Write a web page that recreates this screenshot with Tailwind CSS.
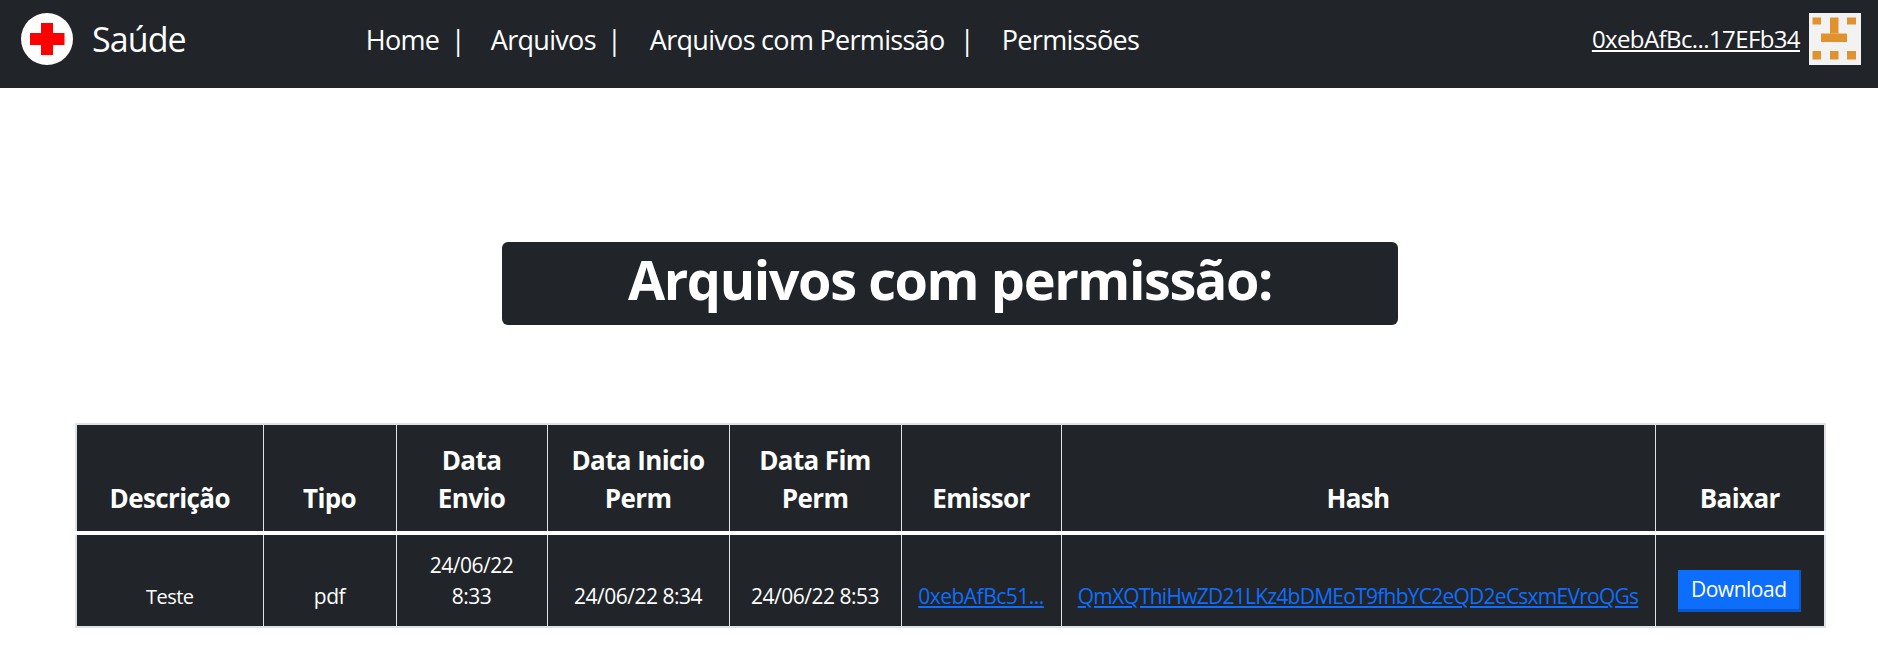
<!DOCTYPE html>
<html lang="pt-BR">
<head>
    <meta charset="UTF-8">
    <title>Saúde</title>
    <script src="https://cdn.jsdelivr.net/npm/@tailwindcss/browser@4"></script>
</head>
<body class="bg-white font-['Open_Sans',sans-serif] text-white">
    <!-- Barra de navegação -->
    <nav class="h-[88px] bg-[#212529] flex items-center pb-[10px] pl-[21px] pr-[17px]">
        <svg class="w-[52px] h-[52px] shrink-0" viewBox="0 0 52 52">
            <circle cx="26" cy="26" r="26" fill="#fff"/>
            <path d="M20 10h12v10h11.500v12H32v10H20V32H9V20h11z" fill="#f00"/>
        </svg>
        <a class="ml-[19px] text-[34px] tracking-[-0.9px]">Saúde</a>
        <ul class="flex ml-[180px] pt-[3px] text-[27px] tracking-[-0.7px]">
            <li class="w-[125px]">Home <span class="ml-[5px]">|</span></li>
            <li class="w-[159px]">Arquivos <span class="ml-[5px]">|</span></li>
            <li class="w-[352px]">Arquivos com Permissão <span class="ml-[9px]">|</span></li>
            <li>Permissões</li>
        </ul>
        <div class="ml-auto flex items-center gap-[9px]">
            <a class="underline text-[24px] tracking-[-0.6px]">0xebAfBc...17EFb34</a>
            <svg class="w-[52px] h-[52px]" viewBox="0 0 52 52">
                <rect width="52" height="52" fill="#f2f2f2"/>
                <g fill="#e0922f">
                    <rect x="3.500" y="4.500" width="8.500" height="7"/>
                    <rect x="38" y="4.500" width="9" height="7"/>
                    <rect x="21" y="4.500" width="8.500" height="16"/>
                    <rect x="12" y="20.500" width="26" height="8.500"/>
                    <rect x="3.500" y="38" width="8.500" height="8.500"/>
                    <rect x="21" y="38" width="8.500" height="8.500"/>
                    <rect x="38" y="38" width="9" height="8.500"/>
                </g>
            </svg>
        </div>
    </nav>

    <!-- Título -->
    <div class="flex justify-center mt-[154px]">
        <h1 class="w-[896px] h-[83px] pb-[9px] bg-[#212529] rounded-md flex items-center justify-center text-[54px] font-bold tracking-[-1.4px] ml-[22px]">Arquivos com permissão:</h1>
    </div>

    <!-- Tabela de arquivos -->
    <div class="mt-[98px] pl-[75px]">
        <table class="w-[1749px] table-fixed border-collapse border-2 border-[#dee2e6] bg-[#212529] text-center">
            <colgroup>
                <col class="w-[187px]">
                <col class="w-[133px]">
                <col class="w-[151px]">
                <col class="w-[182px]">
                <col class="w-[172px]">
                <col class="w-[160px]">
                <col class="w-[594px]">
                <col class="w-[170px]">
            </colgroup>
            <thead class="text-[26px] leading-[38px] tracking-[-0.6px]">
                <tr class="h-[109px] border-b-[4px] border-white">
                    <th class="border border-[#dee2e6] align-bottom pb-[14px] font-bold">Descrição</th>
                    <th class="border border-[#dee2e6] align-bottom pb-[14px] font-bold">Tipo</th>
                    <th class="border border-[#dee2e6] align-bottom pb-[14px] px-8 font-bold">Data Envio</th>
                    <th class="border border-[#dee2e6] align-bottom pb-[14px] px-2 font-bold">Data Inicio Perm</th>
                    <th class="border border-[#dee2e6] align-bottom pb-[14px] px-5 font-bold">Data Fim Perm</th>
                    <th class="border border-[#dee2e6] align-bottom pb-[14px] font-bold">Emissor</th>
                    <th class="border border-[#dee2e6] align-bottom pb-[14px] font-bold">Hash</th>
                    <th class="border border-[#dee2e6] align-bottom pb-[14px] font-bold">Baixar</th>
                </tr>
            </thead>
            <tbody class="text-[21px] leading-[31px] tracking-[-0.5px]">
                <tr class="h-[94px]">
                    <td class="border border-[#dee2e6] align-bottom pb-[14px] text-[20px]">Teste</td>
                    <td class="border border-[#dee2e6] align-bottom pb-[14px]">pdf</td>
                    <td class="border border-[#dee2e6] align-bottom pb-[14px] px-8">24/06/22 8:33</td>
                    <td class="border border-[#dee2e6] align-bottom pb-[14px]">24/06/22 8:34</td>
                    <td class="border border-[#dee2e6] align-bottom pb-[14px]">24/06/22 8:53</td>
                    <td class="border border-[#dee2e6] align-bottom pb-[14px]"><a class="underline text-[#0d6efd]">0xebAfBc51...</a></td>
                    <td class="border border-[#dee2e6] align-bottom pb-[14px] whitespace-nowrap"><a class="underline text-[#0d6efd] tracking-[-0.75px]">QmXQThiHwZD21LKz4bDMEoT9fhbYC2eQD2eCsxmEVroQGs</a></td>
                    <td class="border border-[#dee2e6] align-bottom pb-[14px]">
                        <button class="block mx-auto w-[123px] h-[42px] bg-[#0d6efd] border-r-[2px] border-b-[3px] border-[#0a58ca]">Download</button>
                    </td>
                </tr>
            </tbody>
        </table>
    </div>
</body>
</html>
